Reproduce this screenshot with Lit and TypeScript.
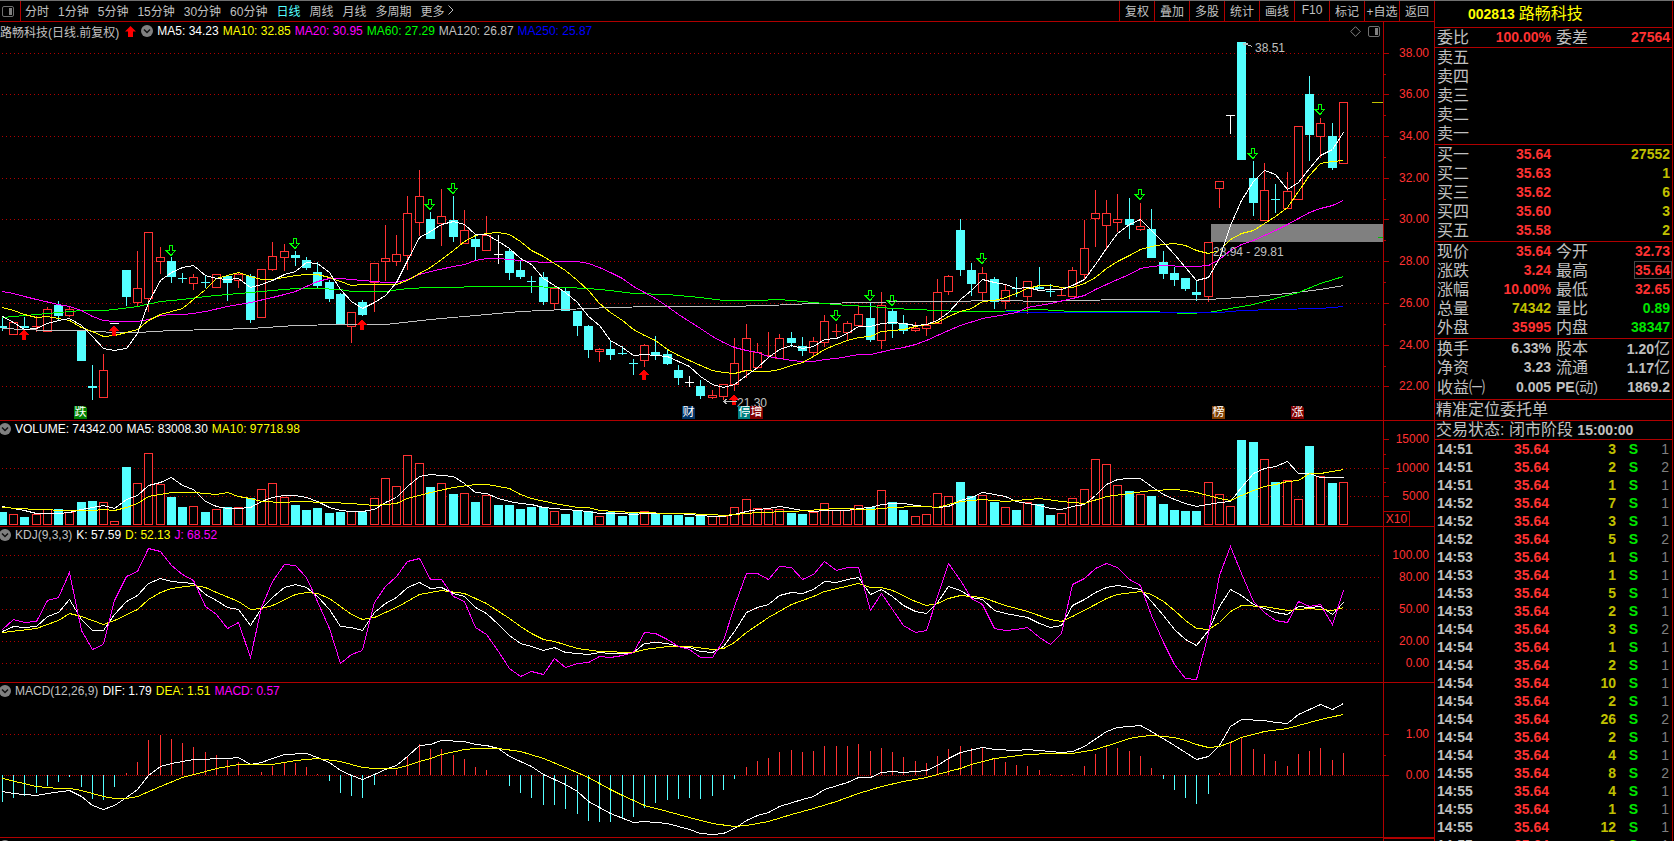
import { LitElement, html, svg, css } from "lit";
import { customElement, property } from "lit/decorators.js";
import { classMap } from "lit/directives/class-map.js";
import { styleMap } from "lit/directives/style-map.js";

// ---------------------------------------------------------------- data

// Levels are stored in thirds of a plot unit.
// Each candle: colour (r up, c down, w unchanged), high, body top, body bottom, low.
const CANDLES = `
c 948 978 984 995|r 967 967 1003 1003|c 953 978 985 985|r 950 979 982 997|r 922 928 994 994
c 903 915 950 960|r 922 928 946 953|c 990 990 1085 1085|c 1095 1158 1164 1202|r 1062 1111 1192 1196
w 969 969 972 972|c 810 810 893 920|r 753 865 907 920|r 697 697 895 938|r 741 772 784 822
c 773 783 833 851|c 820 834 837 851|r 822 832 850 872|c 830 846 849 864|r 823 823 862 862
c 825 828 851 905|r 818 822 841 864|c 822 828 962 971|r 808 808 952 952|r 726 769 808 815
r 732 754 772 815|c 753 765 776 800|c 771 780 806 812|c 786 816 860 864|c 840 846 899 908
c 879 882 972 977|r 937 937 979 1031|c 900 908 947 950|r 790 790 847 938|r 675 775 784 843
r 705 763 784 800|r 588 640 766 812|r 510 589 667 708|c 636 657 719 719|r 567 649 670 740
c 588 660 713 728|r 630 691 730 730|c 706 717 743 780|r 648 706 751 751|w 706 762 765 794
c 745 753 821 842|c 782 810 833 839|c 828 843 846 881|c 816 831 908 917|r 856 865 910 927
c 864 873 935 935|c 933 933 980 1010|c 975 978 1052 1076|r 1044 1048 1055 1088|c 1023 1047 1067 1082
c 1040 1059 1064 1067|c 1077 1089 1092 1127|r 1032 1036 1082 1103|c 1010 1056 1070 1082|c 1047 1062 1094 1097
c 1095 1110 1136 1157|w 1128 1146 1149 1163|c 1140 1158 1190 1199|r 1170 1186 1193 1199|r 1153 1153 1190 1200
r 1014 1090 1153 1175|r 972 1015 1112 1136|r 1030 1057 1103 1109|r 996 1066 1069 1072|r 1002 1015 1075 1075
c 996 1014 1029 1042|c 1011 1038 1055 1070|r 1011 1024 1057 1068|r 946 964 1027 1043|r 972 994 998 1013
r 963 970 997 1021|r 918 943 976 982|c 908 954 1022 1026|r 876 916 1021 1049|c 926 933 974 1014
c 945 969 995 1004|r 966 985 992 998|r 950 976 986 1010|r 837 877 970 970|r 825 829 874 887
c 657 690 812 830|c 789 810 854 890|r 801 820 877 907|c 831 837 908 927|r 854 871 905 927
c 831 864 867 893|r 844 844 890 944|c 801 862 868 868|c 852 873 876 891|r 866 885 890 890
r 801 811 889 889|r 660 745 823 838|r 570 640 655 741|r 600 640 677 752|r 582 658 667 698
c 594 657 677 719|r 609 679 688 693|c 627 687 776 776|c 753 786 824 839|c 801 819 842 860
c 834 834 869 875|c 843 876 887 905|r 727 727 889 906|r 545 545 565 624|w 345 345 348 402
c 126 126 482 482|c 483 534 611 648|r 489 571 661 661|c 552 597 600 639|r 516 574 625 625
r 379 379 598 598|c 228 282 407 483|r 354 370 409 476|c 369 408 506 512|r 307 307 490 490`
  .trim()
  .split(/[|\n]/)
  .map((row) => {
    const [kind, ...v] = row.split(" ");
    return { kind, v: v.map(Number) };
  });

type Point = [number, number];

// A value for every bar.
const dense = (text: string): Point[] =>
  text.trim().split(/\s+/).map((v, i) => [i, Number(v)] as Point);

// "bar:value" pairs, straight between the listed bars.
const sparse = (text: string): Point[] =>
  text.trim().split(/\s+/).map((p) => p.split(":").map(Number) as Point);

const PRICE_LINES: [string, Point[]][] = [
  ["gray", sparse(`0:985 4:991 7:992 10:997 12:997 15:991 19:988 22:985 26:977 30:974 34:972 38:958 42:947
    43:943 46:934 50:927 54:923 58:920 64:919 68:916 72:911 77:908 80:905 84:903 88:900 93:903 95:900 100:899
    107:897 111:888 114:880 117:868 119:856`)],
  ["green", sparse(`0:953 3:943 7:931 9:931 10:928 12:918 14:904 16:898 18:890 20:884 22:878 24:871 26:865
    28:866 30:869 31:874 34:874 36:866 38:862 40:863 42:859 46:860 50:861 52:866 54:872 56:879 59:884 62:893
    64:901 67:901 69:898 71:903 73:910 75:916 77:919 79:925 81:929 83:932 85:934 88:934 92:928 95:934 98:935
    102:935 105:940 107:938 109:925 111:912 113:895 115:877 117:850 119:829`)],
  ["blue", sparse("89:935 91:937 100:937 106:937 108:936 110:930 113:928 117:924 119:918")],
  ["magenta", sparse(`0:874 1:881 2:888 3:898 5:913 6:918 7:932 8:948 9:961 10:965 12:964 13:957 14:947
    15:943 16:943 17:940 18:934 20:918 22:907 24:892 25:883 26:873 27:860 28:845 29:836 30:835 31:837 33:843
    34:848 35:846 36:838 37:822 38:813 40:799 41:793 42:780 43:776 44:775 45:777 46:780 48:786 50:784 51:784
    52:790 53:801 54:818 55:836 56:858 57:878 58:896 59:918 60:942 61:963 62:985 63:1009 64:1026 65:1042
    66:1050 67:1058 68:1069 69:1075 70:1081 71:1084 72:1083 73:1079 74:1076 76:1064 77:1063 79:1048 80:1041
    81:1032 82:1021 83:1005 84:990 85:975 87:956 88:949 90:937 91:921 93:911 95:896 96:885 97:869 98:853
    99:837 100:823 101:806 102:799 103:797 105:798 106:799 107:796 108:777 109:750 110:733 111:721 112:705
    113:690 114:674 115:655 116:637 117:625 118:616 119:601`)],
  ["yellow", dense(`922 932 943 952 950 955 962 981 995 1009 1006 998 988 960 943 933 926 898 868 836 826 817
    829 838 838 831 826 823 823 832 843 857 853 853 853 853 841 821 803 777 752 725 707 700 697 703 725 750 768
    790 810 840 872 910 938 961 989 1005 1022 1048 1067 1082 1096 1110 1117 1120 1112 1114 1114 1107 1096 1086
    1070 1048 1034 1020 1013 1010 994 992 988 979 973 967 950 935 926 905 902 893 881 866 856 856 861 862 850
    831 806 784 766 748 739 734 730 735 750 760 751 717 699 691 670 649 622 573 525 490 485 480`)],
  ["white", dense(`950 966 988 984 970 960 955 975 1008 1046 1051 1045 1000 907 840 816 803 796 826 836 838 835
    862 853 840 824 815 786 791 818 868 903 925 908 886 846 780 713 695 672 664 672 704 702 724 745 776 793 834
    857 877 907 948 977 1020 1043 1066 1063 1066 1070 1085 1099 1130 1153 1161 1153 1127 1103 1073 1047 1037
    1045 1038 1018 1016 1000 979 980 970 968 970 977 972 962 938 897 870 838 847 853 865 862 871 867 868 856
    838 793 746 700 674 658 690 726 763 803 841 832 775 675 600 544 511 523 568 548 506 466 449 397`)],
];

const VOLUMES = dense(`306 313 321 313 298 298 307 276 273 277 334 171 220 130 223 261 291 289 306 298 292 292
  264 238 220 262 285 300 294 309 306 305 306 265 205 229 136 160 231 220 252 250 276 256 285 285 297 291 291
  304 312 303 304 319 306 318 309 304 312 315 315 321 316 320 319 292 268 295 298 298 309 312 307 280 302 301
  286 291 241 276 300 319 313 250 259 216 258 256 276 292 300 277 282 315 310 265 238 148 163 226 243 253 258
  282 300 303 303 217 253 289 90 96 148 216 211 268 108 199 219 217`);

const VOLUME_LINES: [string, Point[]][] = [
  ["white", dense(`288 296 302 309 310 310 307 297 291 286 295 268 256 227 217 203 226 239 273 289 295 294 291
    275 263 256 256 262 273 291 300 304 304 297 278 262 230 199 193 196 200 220 247 251 265 273 280 284 291 295
    298 302 303 310 309 311 313 310 310 310 311 314 317 319 319 314 303 298 296 290 295 302 304 301 300 301 296
    292 284 280 280 285 289 292 288 270 261 247 254 259 275 280 287 295 298 289 283 256 223 208 205 205 230 253
    267 280 290 282 277 273 231 191 175 169 153 189 190 202 202 202`)],
  ["yellow", sparse(`0:292 3:298 6:301 8:300 9:298 10:301 11:292 12:279 13:260 14:253 15:247 17:247 18:250
    19:253 20:247 21:259 22:265 23:274 25:276 26:274 29:277 31:279 33:286 34:283 35:280 36:265 38:246 40:231
    42:223 43:223 44:229 45:235 46:252 47:265 49:280 51:292 52:292 53:300 56:307 60:310 63:314 64:316 65:312
    67:307 70:304 74:296 77:298 79:291 81:290 82:290 83:292 84:282 85:274 87:267 89:274 90:272 92:265 94:275
    96:281 98:259 100:249 102:241 104:238 105:240 106:247 108:265 109:271 110:256 111:240 112:230 113:223
    114:215 115:210 116:191 117:190 118:184 119:178`)],
];

const KDJ_LINES: [string, Point[]][] = [
  ["white", dense(`664 649 653 648 620 606 568 628 661 661 612 574 556 519 505 513 517 521 552 570 592 597 646
    596 562 533 522 532 558 598 649 653 661 608 579 563 533 517 535 533 550 560 593 610 643 676 700 709 721 713
    727 730 733 728 730 730 727 700 697 700 710 712 724 726 710 664 608 593 584 556 547 550 538 514 517 508 502
    553 539 560 587 604 610 577 529 541 562 568 600 609 616 622 640 653 645 586 568 547 532 526 533 537 574 616
    658 688 706 660 590 538 556 583 595 607 612 590 593 590 612 577`)],
  ["yellow", sparse(`0:667 3:655 5:631 6:610 7:619 8:631 9:643 10:631 12:597 13:568 14:547 15:535 17:526
    18:533 19:547 21:575 22:598 23:595 24:586 26:553 27:547 28:549 29:565 30:590 31:613 32:628 33:622 35:592
    37:553 39:541 41:550 42:566 43:581 45:626 46:650 47:670 48:687 49:694 51:715 53:724 56:727 57:718 59:709
    61:710 63:718 64:714 65:698 66:667 68:622 70:583 72:559 73:544 76:521 77:532 78:533 79:541 81:575 82:586
    83:580 84:565 85:556 87:562 89:587 91:604 93:628 94:634 95:619 97:583 98:565 99:553 101:544 102:553 103:574
    104:600 105:631 106:655 107:658 108:638 109:604 110:586 112:589 114:601 116:595 118:601 119:592`)],
  ["magenta", dense(`658 628 637 633 572 561 488 660 717 702 572 498 483 415 424 466 492 510 588 613 655 638
    742 592 514 463 466 503 575 655 760 733 720 578 529 500 455 444 508 509 558 574 653 673 724 775 799 784 793
    745 772 760 757 739 742 736 726 667 670 687 709 718 742 742 692 590 490 490 508 469 472 508 492 455 481 472
    472 601 550 598 647 667 660 560 460 510 565 583 655 661 658 653 683 703 670 522 505 474 460 473 508 526 616
    696 764 804 808 670 496 408 490 575 606 631 637 574 589 583 643 540`)],
];

const MACD_ZERO = 1096;

const MACD_BARS = dense(`1178 1166 1160 1151 1130 1118 1103 1133 1169 1172 1133 1091 1056 990 975 987 999 1011
  1026 1035 1050 1056 1096 1086 1068 1059 1059 1071 1094 1115 1151 1160 1166 1127 1095 1080 1038 1003 1017 1017
  1035 1047 1071 1080 1096 1130 1151 1166 1187 1187 1199 1214 1235 1238 1238 1229 1223 1196 1181 1172 1169 1166
  1169 1160 1142 1109 1071 1053 1044 1026 1020 1026 1023 1008 1008 1008 1002 1023 1014 1026 1041 1053 1059 1038
  1017 1008 1014 1014 1044 1056 1065 1068 1080 1092 1096 1092 1068 1032 1014 1014 1023 1038 1074 1109 1142 1166
  1184 1154 1089 998 982 1017 1032 1053 1068 1032 1023 1014 1050 1029`);

const MACD_LINES: [string, Point[]][] = [
  ["white", sparse(`0:1144 1:1150 2:1153 3:1156 4:1151 6:1142 7:1160 8:1187 9:1198 10:1186 11:1163 12:1138
    13:1095 14:1069 15:1060 17:1049 20:1045 21:1042 22:1062 23:1057 24:1045 25:1034 27:1030 28:1042 29:1057
    30:1080 31:1095 32:1108 33:1093 34:1078 35:1066 36:1038 37:1007 38:1003 39:991 41:995 42:1003 43:1006
    44:1016 45:1038 47:1070 48:1093 49:1108 50:1123 51:1145 52:1175 54:1211 56:1238 57:1234 59:1240 61:1258
    62:1270 63:1273 64:1270 65:1256 66:1232 67:1216 68:1207 69:1190 71:1168 72:1160 73:1138 75:1117 76:1102
    77:1102 78:1087 79:1084 80:1087 82:1081 83:1066 84:1045 85:1028 87:1013 88:1018 90:1022 91:1018 94:1028
    95:1024 96:1010 98:965 99:952 101:946 102:963 104:1006 106:1048 107:1040 108:1006 109:948 110:928 112:931
    113:936 114:940 115:914 117:883 118:898 119:880`)],
  ["yellow", sparse(`0:1106 3:1130 5:1135 6:1135 7:1141 9:1160 10:1165 11:1165 12:1159 14:1129 16:1102
    18:1084 19:1075 21:1063 24:1062 26:1050 28:1045 30:1055 32:1072 33:1075 35:1075 36:1067 37:1055 38:1046
    39:1033 41:1018 42:1015 44:1016 46:1024 48:1046 50:1072 52:1102 53:1120 54:1138 55:1156 57:1187 59:1204
    61:1222 63:1240 65:1249 66:1247 68:1235 70:1213 72:1195 74:1174 76:1150 78:1129 80:1114 82:1102 83:1094
    84:1084 85:1075 86:1063 88:1046 91:1033 93:1030 95:1030 97:1018 99:997 100:985 101:979 102:975 103:979
    104:982 105:990 106:1003 107:1012 108:1010 109:998 110:982 112:964 114:955 117:928 119:913`)],
];

const SELL_SIGNALS: Point[] = [
  [15, 735], [26, 714], [38, 597], [40, 549], [74, 930], [77, 870],
  [79, 885], [87, 759], [101, 567], [111, 444], [117, 312],
];
const BUY_SIGNALS: Point[] = [[2, 988], [10, 975], [32, 957], [57, 1109], [65, 1182]];

// ---------------------------------------------------------------- geometry

const PLOT_WIDTH = 1383;
const LOWER_ORIGIN = 410;

const barX = (i: number) => Math.floor(2.25 + i * 11.27);
const level = (v: number, origin = 0) => origin + Math.floor(v / 3);

const gridLines = (rows: number[]) =>
  rows.map((y) => svg`<line class="grid" x1="2" x2="1381" y1=${y + 0.5} y2=${y + 0.5}></line>`);

const curves = (lines: [string, Point[]][], origin = 0) =>
  lines.map(
    ([color, pts]) => svg`<polyline class="curve ${color}"
      points=${pts.map(([i, v]) => `${barX(i) + 0.5},${level(v, origin) + 0.5}`).join(" ")}></polyline>`
  );

const box = (kind: string, x: number, top: number, bottom: number) =>
  kind === "r" && bottom - top > 1
    ? svg`<rect class="hollow" x=${x - 3.5} y=${top + 0.5} width="8" height=${bottom - top}></rect>`
    : svg`<rect class="solid ${kind}" x=${x - 4} y=${top} width="9" height=${Math.max(bottom - top, 1)}></rect>`;

const candle = (kind: string, v: number[], i: number) => {
  const x = barX(i);
  const [high, top, bottom, low] = v.map((n) => level(n));
  return svg`
    ${high < top ? svg`<rect class="solid ${kind}" x=${x} y=${high} width="1" height=${top - high}></rect>` : ""}
    ${low > bottom ? svg`<rect class="solid ${kind}" x=${x} y=${bottom} width="1" height=${low - bottom}></rect>` : ""}
    ${box(kind, x, top, bottom)}`;
};

const volumeKind = (i: number) => {
  const kind = CANDLES[i].kind;
  if (kind !== "w") return kind;
  return i === 10 || i === 109 ? "r" : "c";
};

interface Axis { y: number; text: string; }

interface Pane {
  id: string;
  top: number;
  height: number;
  title: [string, string][];
  labels: Axis[];
  ticks: number[];
  minor: number[];
  drawing: unknown;
  overlay?: unknown;
  unit?: string;
}

const at = (x: number, y: number, top: number, height: number) =>
  styleMap({ left: `${(x / PLOT_WIDTH) * 100}%`, top: `${((y - top) / height) * 100}%` });

const PRICE_TOP = 40;
const PRICE_HEIGHT = 380;
const NOTES: [number, number, string][] = [
  [1255, 48, "38.51"],
  [1213, 252, "28.94 - 29.81"],
  [737, 403, "21.30"],
];
const BADGES: [number, string, string][] = [
  [74, "跌", "fall"], [682, "财", "report"], [738, "停", "halt"],
  [750, "增", "raise"], [1212, "榜", "board"], [1291, "涨", "raise"],
];
const PRICE_ROWS = [53, 94, 136, 178, 219, 261, 303, 345, 386];

const PANES: Pane[] = [
  {
    id: "price",
    top: PRICE_TOP,
    height: PRICE_HEIGHT,
    title: [
      ["MA5: 34.23", "white"], ["MA10: 32.85", "yellow"], ["MA20: 30.95", "magenta"],
      ["MA60: 27.29", "green"], ["MA120: 26.87", "gray"], ["MA250: 25.87", "blue"],
    ],
    labels: PRICE_ROWS.map((y, i) => ({ y, text: (38 - 2 * i).toFixed(2) })),
    ticks: PRICE_ROWS,
    minor: [74, 115, 157, 199, 240, 282, 324, 366],
    drawing: svg`
      ${gridLines(PRICE_ROWS)}
      <rect class="gap-band" x="1211" y="224" width="172" height="18"></rect>
      <rect class="mark-green" x="1378" y="237" width="5" height="1"></rect>
      <rect class="mark-yellow" x="1372" y="102" width="11" height="1"></rect>
      ${CANDLES.map((c, i) => candle(c.kind, c.v, i))}
      ${curves(PRICE_LINES)}
      <path class="curve gray" d="M1243.5 43.5L1252.5 46.5M1243.5 43.5h4M1243.5 43.5l1 3"></path>
      ${SELL_SIGNALS.map(([i, v]) => svg`<path class="sell"
        d="M${barX(i) - 1.5} ${level(v) + 0.5}h3v5h3l-4.5 5l-5 -5h3.5z"></path>`)}
      ${BUY_SIGNALS.map(([i, v]) => svg`<path class="buy"
        d="M${barX(i)} ${level(v)}l5 5.5h-3v5.5h-4v-5.5h-3z"></path>`)}
      <path class="curve gray" d="M723.5 401.5H737M723.5 401.5l4 -3M723.5 401.5l4 3"></path>`,
    overlay: html`
      ${NOTES.map(([x, y, t]) => html`<span class="note" style=${at(x, y, PRICE_TOP, PRICE_HEIGHT)}>${t}</span>`)}
      ${BADGES.map(([x, t, k]) => html`<span class="badge ${k}"
        style=${at(x, 406, PRICE_TOP, PRICE_HEIGHT)}>${t}</span>`)}`,
  },
  {
    id: "volume",
    top: 437,
    height: 89,
    title: [["VOLUME: 74342.00", "white"], ["MA5: 83008.30", "white"], ["MA10: 97718.98", "yellow"]],
    labels: [{ y: 439, text: "15000" }, { y: 468, text: "10000" }, { y: 496, text: "5000" }],
    ticks: [439, 468, 496],
    minor: [454, 482],
    unit: "X10",
    drawing: svg`
      ${gridLines([468, 496])}
      ${VOLUMES.map(([i, v]) => {
        const kind = volumeKind(i);
        return box(kind, barX(i), level(v, LOWER_ORIGIN), kind === "r" ? 524 : 525);
      })}
      ${curves(VOLUME_LINES, LOWER_ORIGIN)}`,
  },
  {
    id: "kdj",
    top: 543,
    height: 139,
    title: [["KDJ(9,3,3)", "gray"], ["K: 57.59", "white"], ["D: 52.13", "yellow"], ["J: 68.52", "magenta"]],
    labels: [
      { y: 555, text: "100.00" }, { y: 577, text: "80.00" }, { y: 609, text: "50.00" },
      { y: 641, text: "20.00" }, { y: 663, text: "0.00" },
    ],
    ticks: [],
    minor: [],
    drawing: svg`${gridLines([555, 577, 609, 641, 663])}${curves(KDJ_LINES, LOWER_ORIGIN)}`,
  },
  {
    id: "macd",
    top: 699,
    height: 138,
    title: [["MACD(12,26,9)", "gray"], ["DIF: 1.79", "white"], ["DEA: 1.51", "yellow"], ["MACD: 0.57", "magenta"]],
    labels: [{ y: 734, text: "1.00" }, { y: 775, text: "0.00" }],
    ticks: [734, 775],
    minor: [755],
    drawing: svg`
      ${gridLines([734])}
      <line class="zero" x1="2" x2="1383" y1="775.5" y2="775.5"></line>
      ${MACD_BARS.map(([i, v]) => {
        const up = v <= MACD_ZERO;
        const y = level(v, LOWER_ORIGIN);
        const top = Math.min(y, 775);
        return svg`<rect class="solid ${up ? "r" : "c"}" x=${barX(i)} y=${top}
          width="1" height=${Math.max(Math.abs(y - 775), 1)}></rect>`;
      })}
      ${curves(MACD_LINES, LOWER_ORIGIN)}`,
  },
];

const toggleIcon = svg`<circle cx="6" cy="6" r="6" fill="#808080"></circle>
  <path d="M3 4.5L6 7.5L9 4.5" fill="none" stroke="#101010" stroke-width="1.5"></path>`;

const splitIcon = html`<svg class="split" viewBox="0 0 12 11" width="12" height="11" aria-hidden="true">
  <rect x="0.5" y="0.5" width="11" height="10" rx="1.5" fill="none" stroke="#707070"></rect>
  <rect x="7" y="2" width="3" height="7" fill="#808080"></rect></svg>`;

// ---------------------------------------------------------------- chart pane

@customElement("chart-pane")
export class ChartPane extends LitElement {
  @property({ attribute: false }) pane!: Pane;

  static styles = css`
    :host {
      display: grid;
      grid-template-columns: minmax(0, 1fr) 51px;
      min-height: 0;
      border-bottom: 1px solid #b00000;
      color: #c0c0c0;
      overflow: hidden;
    }
    .chart { display: flex; flex-direction: column; min-width: 0; min-height: 0; }
    .head { display: flex; align-items: center; gap: 4px; height: 16px; flex: none; white-space: nowrap; }
    .head.price { height: 18px; }
    .tools { display: flex; align-items: center; gap: 7px; margin-left: auto; padding-right: 3px; }
    .signal { margin: 0 1px 0 2px; }
    .toggle { display: flex; padding: 0; border: 0; background: none; margin-left: -1px; }
    .price .toggle { margin-left: 0; }
    .toggle svg { display: block; }
    .plot { position: relative; flex: 1; min-height: 0; }
    .canvas { display: block; width: 100%; height: 100%; shape-rendering: crispEdges; }
    .grid { stroke: #b00000; stroke-dasharray: 1 3; }
    .zero { stroke: #b00000; stroke-dasharray: 1 1; }
    .curve { fill: none; stroke: currentColor; }
    .white { color: #ffffff; }
    .yellow { color: #ffff00; }
    .magenta { color: #ff00ff; }
    .green { color: #00ff00; }
    .gray { color: #c0c0c0; }
    .blue { color: #0000ff; }
    .hollow { fill: #000000; stroke: #ff3232; }
    .solid.r { fill: #ff3232; }
    .solid.c { fill: #54ffff; }
    .solid.w { fill: #ffffff; }
    .gap-band { fill: #808080; }
    .mark-green { fill: #00c000; }
    .mark-yellow { fill: #c0c000; }
    .sell { fill: none; stroke: #00ff00; }
    .buy { fill: #ff0000; }
    .note { position: absolute; transform: translateY(-50%); line-height: 14px; white-space: nowrap; }
    .badge {
      position: absolute; width: 13px; height: 13px; line-height: 13px;
      color: #ffffff; text-align: center; overflow: hidden;
      clip-path: polygon(0 0, 11px 0, 100% 2px, 100% 100%, 0 100%);
    }
    .fall { background: #008000; }
    .report { background: #003366; }
    .halt { background: #008080; }
    .raise { background: #800000; }
    .board { background: #804000; }
    .axis { display: flex; flex-direction: column; border-left: 1px solid #b00000; color: #ff3232; min-height: 0; }
    .spacer { height: 16px; flex: none; }
    .spacer.price { height: 18px; }
    .scale { position: relative; flex: 1; min-height: 0; }
    .tick { position: absolute; left: 0; width: 5px; height: 1px; background: #b00000; }
    .tick.minor { width: 2px; }
    .label { position: absolute; right: 5px; line-height: 14px; transform: translateY(-50%); }
    .unit {
      position: absolute; left: 0; bottom: 0; box-sizing: border-box; width: 26px; height: 15px;
      border: 1px solid #b00000; border-width: 1px 1px 0 0; line-height: 14px; text-align: center;
    }
  `;

  private top(y: number) {
    return styleMap({ top: `${((y - this.pane.top) / this.pane.height) * 100}%` });
  }

  render() {
    const p = this.pane;
    const main = p.id === "price";
    return html`
      <section class="chart" aria-label=${p.id}>
        <div class=${classMap({ head: true, price: main })}>
          ${main
            ? html`<span>路畅科技(日线.前复权)</span>
                <svg class="signal" width="11" height="11" viewBox="0 0 11 11" aria-hidden="true">
                  <path d="M5.5 0L11 5.5H8V11H3V5.5H0Z" fill="#ff0000"></path>
                </svg>`
            : ""}
          <button class="toggle" aria-label="指标菜单">
            <svg width="12" height="12" viewBox="0 0 12 12">${toggleIcon}</svg>
          </button>
          ${p.title.map(([text, color]) => html`<span class=${color}>${text}</span>`)}
          ${main
            ? html`<span class="tools">
                <svg width="11" height="11" viewBox="0 0 11 11" aria-hidden="true">
                  <path d="M5.5 0.7L10.3 5.5L5.5 10.3L0.7 5.5Z" fill="none" stroke="#808080"></path>
                </svg>
                ${splitIcon}
              </span>`
            : ""}
        </div>
        <div class="plot">
          <svg class="canvas" viewBox="0 ${p.top} ${PLOT_WIDTH} ${p.height}" preserveAspectRatio="none">
            ${p.drawing}
          </svg>
          ${p.overlay ?? ""}
        </div>
      </section>
      <div class="axis">
        <div class=${classMap({ spacer: true, price: main })}></div>
        <div class="scale">
          ${p.ticks.map((y) => html`<i class="tick" style=${this.top(y)}></i>`)}
          ${p.minor.map((y) => html`<i class="tick minor" style=${this.top(y)}></i>`)}
          ${p.labels.map((l) => html`<span class="label" style=${this.top(l.y)}>${l.text}</span>`)}
          ${p.unit ? html`<span class="unit">${p.unit}</span>` : ""}
        </div>
      </div>
    `;
  }
}

// ---------------------------------------------------------------- quote panel

const BIDS = [["买一", "35.64", "27552"], ["买二", "35.63", "1"], ["买三", "35.62", "6"], ["买四", "35.60", "3"], ["买五", "35.58", "2"]];
const ASKS = ["卖五", "卖四", "卖三", "卖二", "卖一"];
const QUOTES = [
  ["现价", "35.64", "red", "今开", "32.73", "red"],
  ["涨跌", "3.24", "red", "最高", "35.64", "red boxed"],
  ["涨幅", "10.00%", "red", "最低", "32.65", "red"],
  ["总量", "74342", "gold", "量比", "0.89", "green"],
  ["外盘", "35995", "red", "内盘", "38347", "green"],
];
const TICKS = [
  ["14:51", 3, 1], ["14:51", 2, 2], ["14:51", 1, 1], ["14:52", 7, 1], ["14:52", 3, 1], ["14:52", 5, 2],
  ["14:53", 1, 1], ["14:53", 1, 1], ["14:53", 5, 1], ["14:53", 2, 1], ["14:54", 3, 2], ["14:54", 1, 1],
  ["14:54", 2, 1], ["14:54", 10, 1], ["14:54", 2, 1], ["14:54", 26, 2], ["14:54", 2, 1], ["14:54", 4, 1],
  ["14:55", 8, 2], ["14:55", 4, 1], ["14:55", 1, 1], ["14:55", 12, 1], ["14:55", 2, 1],
];

@customElement("quote-panel")
export class QuotePanel extends LitElement {
  static styles = css`
    :host {
      display: block;
      box-sizing: border-box;
      height: 100%;
      border-left: 1px solid #b00000;
      border-right: 1px solid #b00000;
      margin-right: 1px;
      overflow: hidden;
      color: #c0c0c0;
      font-size: 16px;
      line-height: 19px;
      white-space: nowrap;
    }
    .block { border-bottom: 1px solid #b00000; padding: 0 2px 1px; }
    .block.tight { padding-bottom: 0; }
    .title { margin: 0; height: 26px; line-height: 26px; padding: 0 0 0 33px; font-size: 16px; font-weight: 400; color: #ffff00; }
    .title b { margin-right: 4px; }
    .row { display: grid; grid-template-columns: 1fr 1fr; column-gap: 5px; height: 19px; }
    .row.last { height: 21px; line-height: 21px; }
    .pair { display: flex; justify-content: space-between; }
    b { font-size: 14px; }
    .red { color: #ff3232; }
    .gold { color: #c0c000; }
    .green { color: #00e600; }
    .end { margin-left: auto; }
    .boxed { outline: 1px solid #484848; outline-offset: -1px; padding: 0 2px 0 1px; margin-right: -2px; height: 18px; }
    .small { font-size: 14px; }
    .flat { padding-left: 1px; padding-bottom: 0; }
    .order { height: 20px; line-height: 20px; }
    .state { height: 18px; line-height: 18px; }
    table { width: 100%; table-layout: fixed; border-collapse: collapse; font-size: 14px; font-weight: 700; }
    td { padding: 0; height: 18px; line-height: 18px; text-align: right; }
    .time { width: 48px; padding-left: 2px; text-align: left; }
    .price { width: 64px; color: #ff3232; }
    .size { width: 67px; color: #c0c000; }
    .side { width: 22px; color: #00e600; }
    .count { padding-right: 3px; color: #808080; font-weight: 400; }
  `;

  render() {
    return html`
      <h1 class="block title"><b>002813</b>路畅科技</h1>
      <div class="block tight">
        <div class="row">
          <div class="pair"><span>委比</span><b class="red">100.00%</b></div>
          <div class="pair"><span>委差</span><b class="red">27564</b></div>
        </div>
      </div>
      <div class="block">
        ${ASKS.map((a) => html`<div class="row"><div class="pair"><span>${a}</span></div></div>`)}
      </div>
      <div class="block">
        ${BIDS.map(([n, p, v]) => html`<div class="row">
          <div class="pair"><span>${n}</span><b class="red">${p}</b></div>
          <div class="pair"><b class="gold end">${v}</b></div>
        </div>`)}
      </div>
      <div class="block">
        ${QUOTES.map(([a, b, c, d, e, f]) => html`<div class="row">
          <div class="pair"><span>${a}</span><b class=${c}>${b}</b></div>
          <div class="pair"><span>${d}</span><b class=${f}>${e}</b></div>
        </div>`)}
      </div>
      <div class="block">
        <div class="row">
          <div class="pair"><span>换手</span><b>6.33%</b></div>
          <div class="pair"><span>股本</span><span><b>1.20</b>亿</span></div>
        </div>
        <div class="row">
          <div class="pair"><span>净资</span><b>3.23</b></div>
          <div class="pair"><span>流通</span><span><b>1.17</b>亿</span></div>
        </div>
        <div class="row last">
          <div class="pair"><span>收益㈠</span><b>0.005</b></div>
          <div class="pair"><span class="small"><b>PE</b>(动)</span><b>1869.2</b></div>
        </div>
      </div>
      <div class="block flat order">精准定位委托单</div>
      <div class="block flat state">交易状态: 闭市阶段 <b>15:00:00</b></div>
      <table aria-label="分笔成交">
        <tbody>
          ${TICKS.map(([time, size, count]) => html`<tr>
            <td class="time">${time}</td><td class="price">35.64</td><td class="size">${size}</td>
            <td class="side">S</td><td class="count">${count}</td>
          </tr>`)}
        </tbody>
      </table>
    `;
  }
}

// ---------------------------------------------------------------- shell

const PERIODS = ["分时", "1分钟", "5分钟", "15分钟", "30分钟", "60分钟", "日线", "周线", "月线", "多周期"];
const ACTIONS = ["复权", "叠加", "多股", "统计", "画线", "F10", "标记", "+自选", "返回"];

@customElement("app-root")
export class AppRoot extends LitElement {
  static styles = css`
    :host {
      display: grid;
      grid-template-columns: minmax(0, 1fr) 240px;
      box-sizing: border-box;
      height: 100vh;
      border-top: 1px solid #707070;
      background: #000000;
      color: #c0c0c0;
      font: 12px "Liberation Sans", "Noto Sans CJK SC", sans-serif;
      overflow: hidden;
    }
    .main {
      display: grid;
      grid-template-rows: 21px 399fr 106fr 156fr 155fr 3px;
      min-width: 0;
      min-height: 0;
    }
    .bar { display: flex; border-bottom: 1px solid #b00000; white-space: nowrap; }
    button { font: inherit; color: inherit; background: none; border: 0; padding: 0 0 2px; }
    .layout { display: flex; align-items: center; width: 20px; padding: 0 0 0 2px; box-sizing: border-box; }
    .periods { display: flex; align-items: center; gap: 9px; padding-left: 4px; border-left: 1px solid #b00000; }
    .active { color: #54ffff; }
    .more { display: flex; align-items: center; gap: 3px; }
    .actions { display: flex; margin-left: auto; }
    .actions button { width: 35px; border-left: 1px solid #b00000; text-align: center; }
    .strip { display: grid; grid-template-columns: minmax(0, 1fr) 51px; overflow: hidden; }
    .strip svg { display: block; margin: 2px 0 0 -1px; }
    .corner { border: 1px solid #b00000; border-width: 1px 0 0 1px; }
  `;

  render() {
    return html`
      <main class="main">
        <nav class="bar">
          <button class="layout" aria-label="布局">${splitIcon}</button>
          <div class="periods">
            ${PERIODS.map((p) => html`<button class=${classMap({ active: p === "日线" })}>${p}</button>`)}
            <button class="more">更多
              <svg width="6" height="10" viewBox="0 0 6 10" aria-hidden="true">
                <path d="M0.5 0.5L5 5L0.5 9.5" fill="none" stroke="#c0c0c0"></path>
              </svg>
            </button>
          </div>
          <div class="actions">${ACTIONS.map((a) => html`<button>${a}</button>`)}</div>
        </nav>
        ${PANES.map((pane) => html`<chart-pane .pane=${pane}></chart-pane>`)}
        <div class="strip">
          <svg width="12" height="12" viewBox="0 0 12 12" aria-hidden="true">${toggleIcon}</svg>
          <div class="corner"></div>
        </div>
      </main>
      <quote-panel></quote-panel>
    `;
  }
}
